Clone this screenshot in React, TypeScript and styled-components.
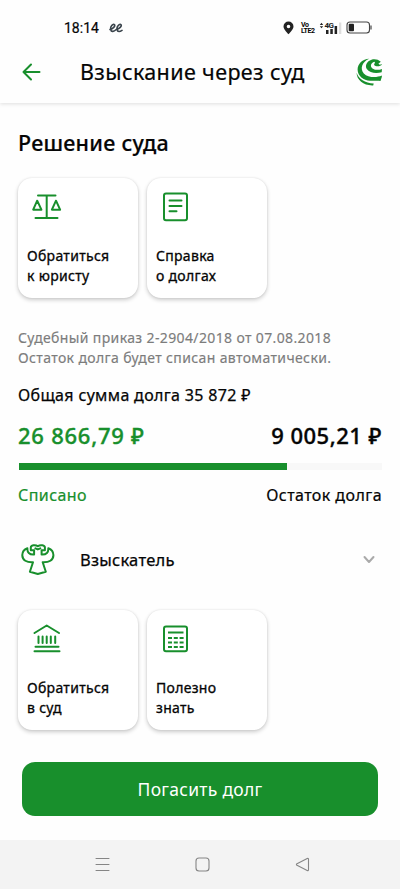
import React from 'react';
import styled, { createGlobalStyle } from 'styled-components';

const GREEN = '#188f2c';

const GlobalStyle = createGlobalStyle`
  * { box-sizing: border-box; }
  body { margin: 0; background: #fff; }
  h1, h2, p { margin: 0; }
  button { border: 0; padding: 0; background: none; font: inherit; color: inherit; }
  svg { display: block; flex: none; }
`;

const Screen = styled.div`
  width: 400px;
  height: 889px;
  overflow: hidden;
  display: flex;
  flex-direction: column;
  background: #fefefe;
  color: #050505;
  font-family: 'Noto Sans', sans-serif;
`;

const StatusBar = styled.div`
  height: 42px;
  padding: 13px 28px 0 64px;
  display: flex;
  align-items: center;
  justify-content: space-between;
`;

const StatusGroup = styled.div<{ $gap: number }>`
  display: flex;
  align-items: center;
  gap: ${(p) => p.$gap}px;
`;

const Clock = styled.span`
  font: 400 14px/20px Roboto, sans-serif;
  -webkit-text-stroke: 0.2px currentColor;
`;

const Header = styled.header`
  height: 61px;
  flex: none;
  padding: 0 17px 1px 22px;
  display: flex;
  align-items: center;
  box-shadow: 0 1px 4px rgba(0, 0, 0, 0.13);
  clip-path: inset(0 0 -8px 0);
`;

const Title = styled.h1`
  flex: 1;
  margin-left: 39px;
  font-size: 21.5px;
  line-height: 30px;
  font-weight: 400;
  letter-spacing: 0.38px;
  white-space: nowrap;
  -webkit-text-stroke: 0.2px currentColor;
`;

const Content = styled.main`
  flex: 1;
  padding: 25px 18px 0;
`;

const SectionTitle = styled.h2`
  font-size: 21.5px;
  line-height: 30px;
  font-weight: 500;
  letter-spacing: 0.25px;
  -webkit-text-stroke: 0.2px currentColor;
`;

const Cards = styled.div<{ $top: number }>`
  display: flex;
  gap: 9px;
  margin-top: ${(p) => p.$top}px;
`;

const Card = styled.button`
  width: 120px;
  height: 120px;
  padding: 14px 9px 12px;
  display: flex;
  flex-direction: column;
  justify-content: space-between;
  border-radius: 14px;
  background: #fff;
  text-align: left;
  box-shadow: 0 2px 4px rgba(0, 0, 0, 0.2), 0 0 2px rgba(0, 0, 0, 0.1);
`;

const CardLabel = styled.span`
  font-size: 14px;
  line-height: 20px;
  letter-spacing: 0.3px;
  white-space: pre-line;
  -webkit-text-stroke: 0.3px currentColor;
`;

const Note = styled.p`
  margin-top: 30px;
  color: #7c7c7c;
  font-size: 14px;
  line-height: 20px;
  letter-spacing: 0.37px;
  white-space: pre;
  -webkit-text-stroke: 0.15px currentColor;
`;

const Total = styled.p`
  margin-top: 14px;
  font-size: 16px;
  line-height: 26px;
  letter-spacing: 0.34px;
  white-space: nowrap;
  -webkit-text-stroke: 0.25px currentColor;
`;

const Split = styled.div`
  display: flex;
  justify-content: space-between;
  white-space: nowrap;
`;

const Amount = styled.span<{ $green?: boolean }>`
  margin-top: 12px;
  font-size: 22px;
  line-height: 30px;
  font-weight: 500;
  letter-spacing: ${(p) => (p.$green ? 0.75 : 0.5)}px;
  color: ${(p) => (p.$green ? GREEN : 'inherit')};
  -webkit-text-stroke: 0.35px currentColor;
`;

const Caption = styled.span<{ $green?: boolean }>`
  margin-top: 12px;
  font-size: 16px;
  line-height: 26px;
  letter-spacing: 0.43px;
  color: ${(p) => (p.$green ? GREEN : 'inherit')};
  -webkit-text-stroke: 0.2px currentColor;
`;

const Track = styled.div`
  height: 7px;
  margin: 13px 0 0 1px;
  background: #f8f8f8;
`;

const Fill = styled.div`
  width: 268px;
  height: 100%;
  background: ${GREEN};
`;

const Claimant = styled.button`
  width: 100%;
  height: 40px;
  margin-top: 32px;
  padding: 0 6px 0 3px;
  display: flex;
  align-items: center;
`;

const ClaimantLabel = styled.span`
  flex: 1;
  margin-left: 25px;
  text-align: left;
  font-size: 16.5px;
  line-height: 26px;
  letter-spacing: 0.25px;
  -webkit-text-stroke: 0.25px currentColor;
`;

const PayButton = styled.button`
  width: 356px;
  height: 54px;
  margin: 32px 0 0 4px;
  border-radius: 13px;
  background: ${GREEN};
  color: #fff;
  font-size: 17.5px;
  line-height: 26px;
  letter-spacing: 0.28px;
`;

const NavBar = styled.nav`
  height: 49px;
  flex: none;
  padding: 0 90px 0 95px;
  display: flex;
  align-items: center;
  justify-content: space-between;
  background: #f3f3f3;
`;

const Svg = ({ w, h, children, sw = 2, c = GREEN }: { w: number; h: number; children: React.ReactNode; sw?: number; c?: string }) => (
  <svg width={w} height={h} viewBox={`0 0 ${w} ${h}`} fill="none" stroke={c} strokeWidth={sw} strokeLinecap="round" strokeLinejoin="round">
    {children}
  </svg>
);

const ScalesIcon = () => (
  <Svg w={38} h={30}>
    <path d="M11 3.5h17.5M19.7 3.5V26M8.5 26h22M10.2 8.7l-4 9h8.2zM29 8.7l-4.1 9h8.2z" />
  </Svg>
);
const DocumentIcon = () => (
  <Svg w={38} h={30}>
    <rect x="8" y="1.5" width="23" height="26.8" rx="2" />
    <path d="M13.5 8.5h12M13.5 14h12M13.5 19.3h7" />
  </Svg>
);
const CourtIcon = () => (
  <Svg w={38} h={30}>
    <path d="M7.5 9L19.7 1.5 32 9M11.5 12.5v6.5M15.6 12.5v6.5M19.7 12.5v6.5M23.8 12.5v6.5M28.2 12.5v6.5M8.5 22.8h23M7.5 27.2h25" />
  </Svg>
);
const CalculatorIcon = () => (
  <Svg w={38} h={30}>
    <rect x="8" y="2.5" width="23" height="24.8" rx="2" />
    <path strokeLinecap="butt" d="M12 8.4h15.5M12 14h4M17.8 14h4M23.6 14h4M12 18.5h4M17.8 18.5h4M23.6 18.5h4M12 23h4M17.8 23h4M23.6 23h4" />
  </Svg>
);
const EagleIcon = () => (
  <Svg w={34} h={32} sw={2}>
    <path d="M6.4 4.2C3 5.5 1.2 8.2 1.3 11.4C1.5 16.2 5.5 18.6 12 18.3L8.9 27.7L16.8 30L24.8 27.7L21.7 18.3C28.2 18.6 32.2 16.2 32.4 11.4C32.5 8.2 30.7 5.5 27.3 4.2C27.6 8.2 25.5 10.8 20.6 10.5V6.3H23.9V3.5C23.9 1.3 19.5.2 16.8 2.3C14.2.2 9.8 1.3 9.8 3.5V6.3H13.1V10.5C8.2 10.8 6.1 8.2 6.4 4.2ZM14.4 4.3L16.8 5.4L19.3 4.3" />
  </Svg>
);

const Logo = () => (
  <svg width="27" height="28" viewBox="0 0 27 28" fill={GREEN}>
    <path d="M13.2.8C6.5.9 1.6 6 1.6 11.6C1.6 18 7.5 22.5 14 22.8C17.5 23 20.5 22.6 24.5 22.9L25.9 18.8L25.8 17.5C20.5 19.8 12.2 19.8 7.8 15.4C3.7 10.6 6 4 13.2.8Z" />
    <path d="M15.5 1.7C10.8 3.2 8.7 7.7 10.8 11C13.5 15.2 20.3 15.7 25.7 14.3L26 11C20.7 13 15.3 11.2 14.9 7.9C14.7 5.8 16.6 4.3 18.6 3.8L19 5C17.6 5.9 17.9 7.6 19.6 8.1C22 8.8 24.8 8.1 26 6.6L25.7 6.3L23.8 6.8L22.4 5.8L24.8 3.8C22.2 1.2 18.3.7 15.5 1.7Z" />
    <path d="M.6 14.8C2.6 21 9 25.3 17.7 25.5L17.2 27.4C8 27.9.6 22 .6 14.8Z" />
  </svg>
);

const NetworkText = styled.span`
  width: 14px;
  margin-left: 3px;
  font: 700 7px/6px Roboto, sans-serif;
  letter-spacing: -0.4px;
  white-space: pre;
`;

export default function App() {
  return (
    <Screen>
      <GlobalStyle />
      <StatusBar>
        <StatusGroup $gap={10}>
          <Clock>18:14</Clock>
          <Svg w={14} h={10} sw={1.6} c="#39434b">
            <path d="M1 6.5C4 6 6.5 3 5.5 1.7C4 .2 1 4 1.7 6.5C2.3 9.5 5 8.5 7.2 6.5C10.5 6 13 3 12 1.7C10.5.2 7.5 4 8 6.5C8.6 9.3 11 8.7 13 7.4" />
          </Svg>
        </StatusGroup>
        <StatusGroup $gap={4}>
          <svg width="11" height="14" viewBox="0 0 11 14" fill="#222">
            <path fillRule="evenodd" d="M5.5.5A5 5 0 0 0 .5 5.5C.5 8.5 5.5 13.3 5.5 13.3S10.5 8.5 10.5 5.5A5 5 0 0 0 5.5.5ZM5.5 3.7a1.8 1.8 0 1 1 0 3.6 1.8 1.8 0 0 1 0-3.6Z" />
          </svg>
          <NetworkText>{'Vo\nLTE2'}</NetworkText>
          <svg width="23" height="14" viewBox="0 0 23 14" fill="#222">
            <path d="M.8 4L2.5 1.8 4.2 4ZM.8 5.2L2.5 7.2 4.2 5.2Z" />
            <rect x="7" y="9" width="2.5" height="4" />
            <rect x="11.3" y="8" width="2.5" height="5" />
            <rect x="15.6" y="5" width="2.5" height="8" />
            <rect x="20" y="1.5" width="2.3" height="11.5" fill="#ddd" />
            <text x="5.5" y="7" fontFamily="Roboto" fontWeight="700" fontSize="8" letterSpacing="-.5">4G</text>
          </svg>
          <svg width="26" height="13" viewBox="0 0 26 13" fill="none">
            <rect x="1" y="1" width="22.5" height="11" rx="3" stroke="#444" strokeWidth="1.1" />
            <rect x="2.7" y="2.7" width="5.3" height="7.6" rx="1" fill="#222" />
            <path d="M25 4.5v4" stroke="#444" strokeWidth="1.2" />
          </svg>
        </StatusGroup>
      </StatusBar>
      <Header>
        <Svg w={19} h={18}>
          <path d="M17.5 9H1.5M9 1.5L1.5 9L9 16.5" />
        </Svg>
        <Title>Взыскание через суд</Title>
        <Logo />
      </Header>
      <Content>
        <SectionTitle>Решение суда</SectionTitle>
        <Cards $top={20}>
          <Card>
            <ScalesIcon />
            <CardLabel>{'Обратиться\nк юристу'}</CardLabel>
          </Card>
          <Card>
            <DocumentIcon />
            <CardLabel>{'Справка\nо долгах'}</CardLabel>
          </Card>
        </Cards>
        <Note>{'Судебный приказ 2-2904/2018 от 07.08.2018\nОстаток долга будет списан автоматически.'}</Note>
        <Total>Общая сумма долга 35 872 ₽</Total>
        <Split>
          <Amount $green>26 866,79 ₽</Amount>
          <Amount>9 005,21 ₽</Amount>
        </Split>
        <Track>
          <Fill />
        </Track>
        <Split>
          <Caption $green>Списано</Caption>
          <Caption>Остаток долга</Caption>
        </Split>
        <Claimant>
          <EagleIcon />
          <ClaimantLabel>Взыскатель</ClaimantLabel>
          <Svg w={14} h={10} c="#aaa">
            <path d="M2.5 2L7 7L11.5 2" />
          </Svg>
        </Claimant>
        <Cards $top={30}>
          <Card>
            <CourtIcon />
            <CardLabel>{'Обратиться\nв суд'}</CardLabel>
          </Card>
          <Card>
            <CalculatorIcon />
            <CardLabel>{'Полезно\nзнать'}</CardLabel>
          </Card>
        </Cards>
        <PayButton>Погасить долг</PayButton>
      </Content>
      <NavBar>
        <Svg w={15} h={15} sw={1} c="#858585">
          <path d="M1 1.5h13M1 7.5h13M1 13.5h13" />
        </Svg>
        <Svg w={15} h={15} sw={1.1} c="#858585">
          <rect x="1" y="1" width="13" height="13" rx="3" />
        </Svg>
        <Svg w={15} h={15} sw={1.1} c="#858585">
          <path d="M2 6.7Q.8 7.5 2 8.3L12.2 13.5Q13.5 14 13.5 12.7V2.3Q13.5 1 12.2 1.5Z" />
        </Svg>
      </NavBar>
    </Screen>
  );
}
